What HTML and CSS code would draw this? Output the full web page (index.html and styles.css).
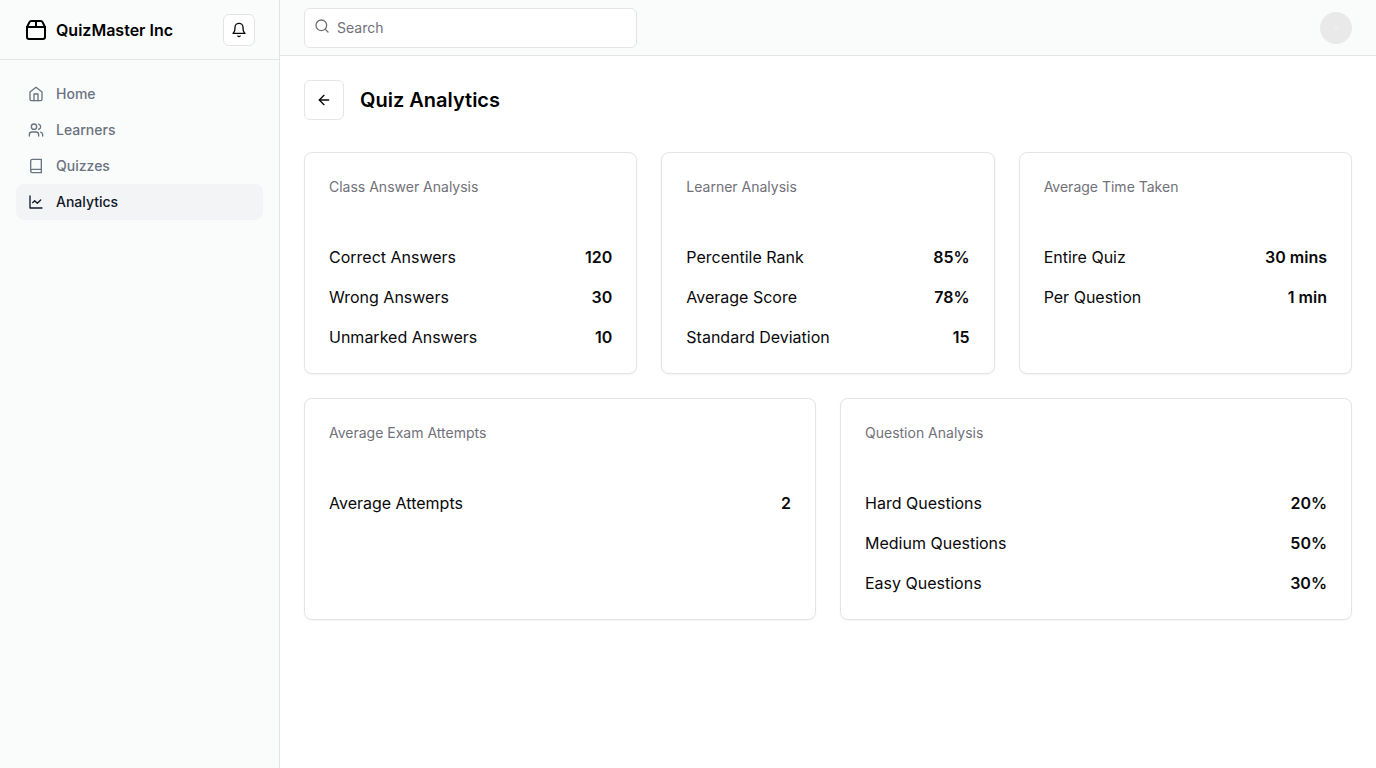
FILE: index.html
```html
<!DOCTYPE html>
<html lang="en">
<head>
<meta charset="utf-8">
<meta name="viewport" content="width=device-width, initial-scale=1">
<title>Quiz Analytics</title>
<link rel="stylesheet" href="styles.css">
</head>
<body>
<div class="layout">
  <aside class="sidebar">
    <div class="sidebar-header">
      <a class="brand" href="#">
        <svg class="icon icon-lg" viewBox="0 0 24 24" aria-hidden="true"><path d="M3 9h18v10a2 2 0 0 1-2 2H5a2 2 0 0 1-2-2V9Z"/><path d="m3 9 2.45-4.9A2 2 0 0 1 7.24 3h9.52a2 2 0 0 1 1.8 1.1L21 9"/><path d="M12 3v6"/></svg>
        <span>QuizMaster Inc</span>
      </a>
      <button class="icon-button icon-button-sm" type="button" aria-label="Toggle notifications">
        <svg class="icon" viewBox="0 0 24 24" aria-hidden="true"><path d="M6 8a6 6 0 0 1 12 0c0 7 3 9 3 9H3s3-2 3-9"/><path d="M10.3 21a1.94 1.94 0 0 0 3.4 0"/></svg>
      </button>
    </div>
    <nav class="nav">
      <a class="nav-link" href="#">
        <svg class="icon" viewBox="0 0 24 24" aria-hidden="true"><path d="m3 9 9-7 9 7v11a2 2 0 0 1-2 2H5a2 2 0 0 1-2-2z"/><path d="M9 22V12h6v10"/></svg>
        Home
      </a>
      <a class="nav-link" href="#">
        <svg class="icon" viewBox="0 0 24 24" aria-hidden="true"><path d="M16 21v-2a4 4 0 0 0-4-4H6a4 4 0 0 0-4 4v2"/><circle cx="9" cy="7" r="4"/><path d="M22 21v-2a4 4 0 0 0-3-3.87"/><path d="M16 3.13a4 4 0 0 1 0 7.75"/></svg>
        Learners
      </a>
      <a class="nav-link" href="#">
        <svg class="icon" viewBox="0 0 24 24" aria-hidden="true"><path d="M4 19.5v-15A2.5 2.5 0 0 1 6.5 2H20v20H6.5a2.5 2.5 0 0 1 0-5H20"/></svg>
        Quizzes
      </a>
      <a class="nav-link active" href="#" aria-current="page">
        <svg class="icon" viewBox="0 0 24 24" aria-hidden="true"><path d="M3 3v18h18"/><path d="m19 9-5 5-4-4-3 3"/></svg>
        Analytics
      </a>
    </nav>
  </aside>
  <div class="content">
    <header class="topbar">
      <form class="search-form">
        <div class="search">
          <svg class="icon search-icon" viewBox="0 0 24 24" aria-hidden="true"><circle cx="11" cy="11" r="8"/><path d="m21 21-4.3-4.3"/></svg>
          <input class="search-input" type="search" placeholder="Search" aria-label="Search">
        </div>
      </form>
      <button class="avatar" type="button" aria-label="Toggle user menu"></button>
    </header>
    <main class="main">
      <div class="page-heading">
        <button class="icon-button" type="button" aria-label="Back">
          <svg class="icon" viewBox="0 0 24 24" aria-hidden="true"><path d="m12 19-7-7 7-7"/><path d="M19 12H5"/></svg>
        </button>
        <h1 class="title">Quiz Analytics</h1>
      </div>
      <div class="grid grid-three">
        <section class="card">
          <h2 class="card-title">Class Answer Analysis</h2>
          <dl class="stats">
            <div class="stat"><dt>Correct Answers</dt><dd>120</dd></div>
            <div class="stat"><dt>Wrong Answers</dt><dd>30</dd></div>
            <div class="stat"><dt>Unmarked Answers</dt><dd>10</dd></div>
          </dl>
        </section>
        <section class="card">
          <h2 class="card-title">Learner Analysis</h2>
          <dl class="stats">
            <div class="stat"><dt>Percentile Rank</dt><dd>85%</dd></div>
            <div class="stat"><dt>Average Score</dt><dd>78%</dd></div>
            <div class="stat"><dt>Standard Deviation</dt><dd>15</dd></div>
          </dl>
        </section>
        <section class="card">
          <h2 class="card-title">Average Time Taken</h2>
          <dl class="stats">
            <div class="stat"><dt>Entire Quiz</dt><dd>30 mins</dd></div>
            <div class="stat"><dt>Per Question</dt><dd>1 min</dd></div>
          </dl>
        </section>
      </div>
      <div class="grid grid-two">
        <section class="card">
          <h2 class="card-title">Average Exam Attempts</h2>
          <dl class="stats">
            <div class="stat"><dt>Average Attempts</dt><dd>2</dd></div>
          </dl>
        </section>
        <section class="card">
          <h2 class="card-title">Question Analysis</h2>
          <dl class="stats">
            <div class="stat"><dt>Hard Questions</dt><dd>20%</dd></div>
            <div class="stat"><dt>Medium Questions</dt><dd>50%</dd></div>
            <div class="stat"><dt>Easy Questions</dt><dd>30%</dd></div>
          </dl>
        </section>
      </div>
    </main>
  </div>
</div>
</body>
</html>
```
FILE: styles.css
```css
:root {
  --border: #e4e4e7;
  --surface: #fafcfb;
  --muted: #71717a;
  --text: #09090b;
}

*,
*::before,
*::after {
  box-sizing: border-box;
}

body {
  margin: 0;
  background: #fff;
  color: var(--text);
  font-family: Inter, "Liberation Sans", sans-serif;
  font-size: 16px;
  line-height: 24px;
}

a {
  color: inherit;
  text-decoration: none;
}

button,
input {
  font: inherit;
  color: inherit;
}

.layout {
  display: grid;
  grid-template-columns: 280px 1fr;
  min-height: 100vh;
}

.icon {
  flex: none;
  width: 16px;
  height: 16px;
  fill: none;
  stroke: currentColor;
  stroke-width: 2;
  stroke-linecap: round;
  stroke-linejoin: round;
}

.icon-lg {
  width: 24px;
  height: 24px;
}

.sidebar {
  display: flex;
  flex-direction: column;
  gap: 8px;
  border-right: 1px solid var(--border);
  background: var(--surface);
}

.sidebar-header {
  display: flex;
  align-items: center;
  justify-content: space-between;
  height: 60px;
  padding: 0 24px;
  border-bottom: 1px solid var(--border);
}

.brand {
  display: flex;
  align-items: center;
  gap: 8px;
  font-weight: 600;
  color: #000;
}

.icon-button {
  display: inline-flex;
  align-items: center;
  justify-content: center;
  width: 40px;
  height: 40px;
  padding: 0;
  border: 1px solid var(--border);
  border-radius: 6px;
  background: #fff;
  cursor: pointer;
}

.icon-button-sm {
  width: 32px;
  height: 32px;
}

.nav {
  padding: 8px 16px;
  font-size: 14px;
  line-height: 20px;
  font-weight: 500;
}

.nav-link {
  display: flex;
  align-items: center;
  gap: 12px;
  padding: 8px 12px;
  border-radius: 8px;
  color: #6b7280;
}

.nav-link.active {
  background: #f3f4f6;
  color: #111827;
}

.content {
  display: flex;
  flex-direction: column;
  min-width: 0;
}

.topbar {
  display: flex;
  align-items: center;
  gap: 16px;
  height: 56px;
  padding: 0 24px;
  border-bottom: 1px solid var(--border);
  background: var(--surface);
}

.search-form {
  flex: 1;
}

.search {
  position: relative;
  width: 33.3333%;
}

.search-icon {
  position: absolute;
  top: 10px;
  left: 10px;
  color: var(--muted);
}

.search-input {
  display: block;
  width: 100%;
  height: 40px;
  padding: 8px 12px 8px 32px;
  border: 1px solid var(--border);
  border-radius: 6px;
  background: #fff;
  font-size: 14px;
  line-height: 20px;
  appearance: none;
}

.search-input::placeholder {
  color: var(--muted);
  opacity: 1;
}

.avatar {
  width: 32px;
  height: 32px;
  padding: 0;
  border: 0;
  border-radius: 50%;
  background: radial-gradient(circle, #eeeeee 0, #e9e9e9 3px);
  cursor: pointer;
}

.main {
  display: flex;
  flex-direction: column;
  gap: 24px;
  padding: 24px;
}

.page-heading {
  display: flex;
  align-items: center;
  gap: 16px;
  padding-bottom: 8px;
}

.title {
  margin: 0;
  font-size: 20px;
  line-height: 28px;
  font-weight: 600;
  color: #000;
}

.grid {
  display: grid;
  gap: 24px;
}

.grid-three {
  grid-template-columns: repeat(3, 1fr);
}

.grid-two {
  grid-template-columns: repeat(2, 1fr);
}

.card {
  padding: 24px;
  border: 1px solid var(--border);
  border-radius: 8px;
  background: #fff;
  box-shadow: 0 1px 2px rgba(0, 0, 0, 0.05);
}

.card-title {
  margin: 0 0 48px;
  font-size: 14px;
  line-height: 20px;
  font-weight: 400;
  color: var(--muted);
}

.stats {
  display: grid;
  gap: 16px;
  margin: 0;
}

.stat {
  display: flex;
  align-items: center;
  justify-content: space-between;
}

.stat dd {
  margin: 0;
  font-weight: 600;
}
```
